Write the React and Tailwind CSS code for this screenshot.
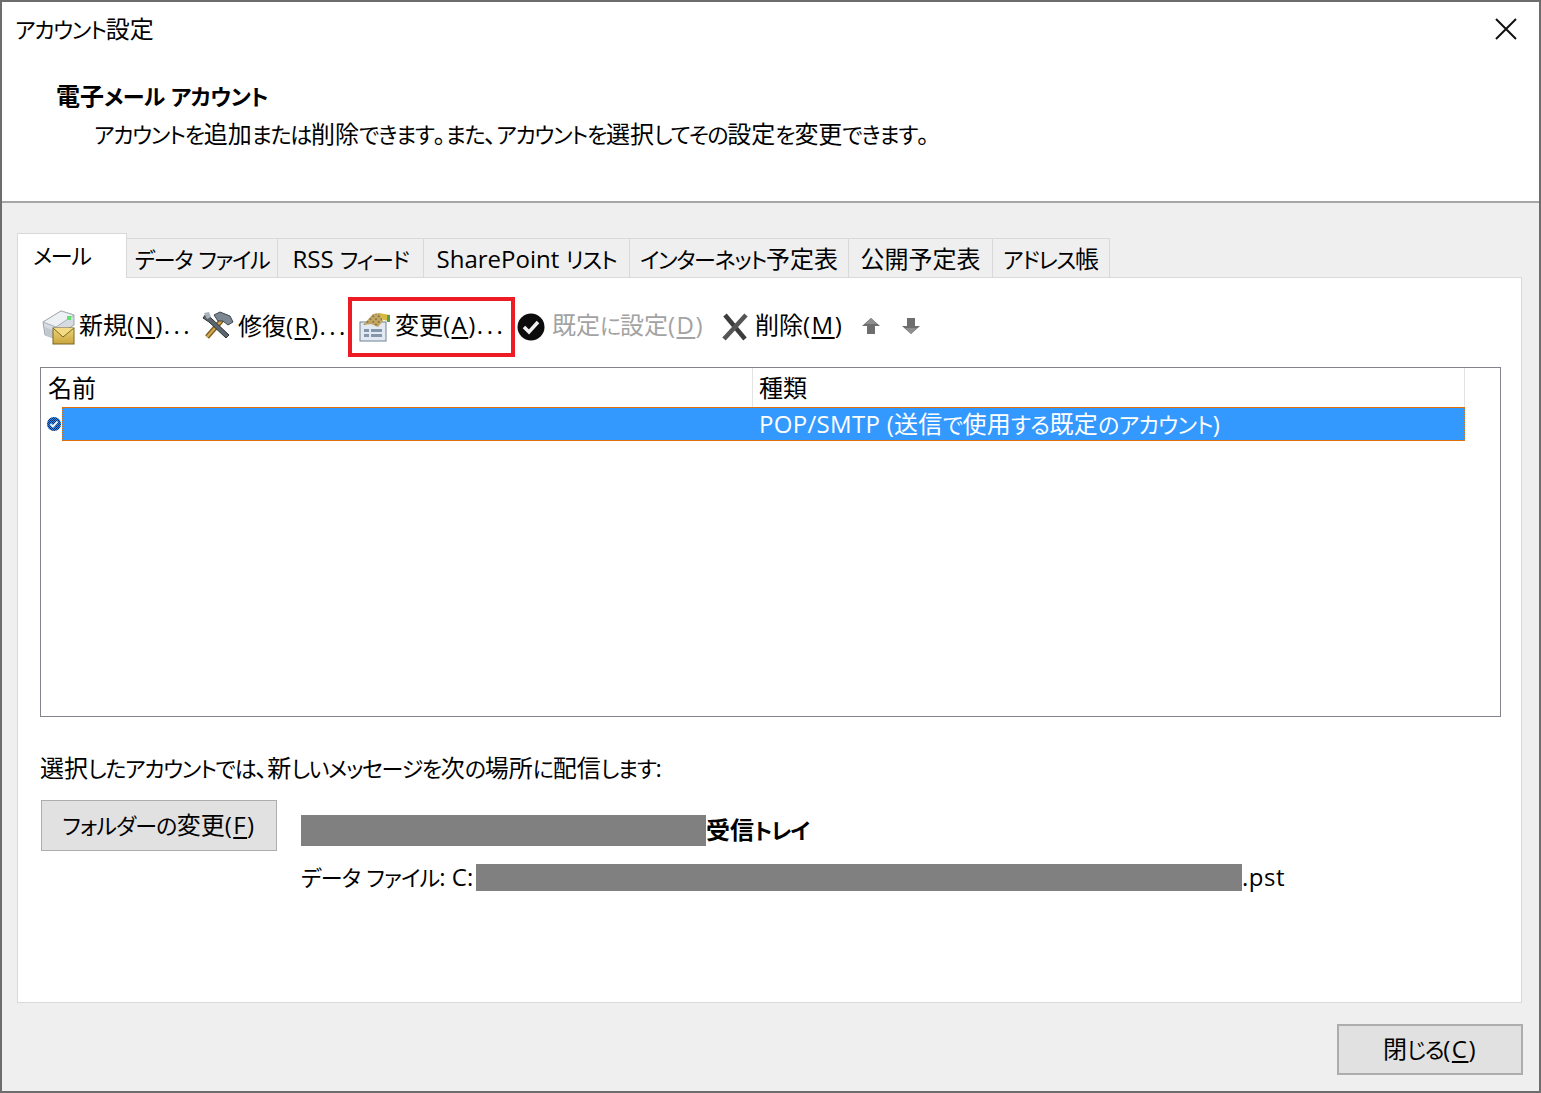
import React from 'react';

// kana runs are smaller and narrower in the reference font, so shrink only those
function T({ children, kana = 'text-[22px] tracking-[-1.3px]' }) {
    return String(children).split(/([\u3041-\u3096\u30a1-\u30ff]+)/).map((part, i) => (
        i % 2 === 1 ? <span key={i} className={kana}>{part}</span> : part
    ));
}

function NewIcon() {
    return (
        <svg width="34" height="36" viewBox="0 0 34 36" className="shrink-0">
            <defs>
                <linearGradient id="newGold" x1="0" y1="0" x2="0" y2="1">
                    <stop offset="0" stopColor="#f0d676" />
                    <stop offset="1" stopColor="#c9a53f" />
                </linearGradient>
            </defs>
            <path d="M1 13 L19 2 L32 6 L32 16 L14 28 L3 26 Z" fill="#d5dbe0" stroke="#9aa3ab" />
            <path d="M1 13 L14 18 L32 6 L19 2 Z" fill="#eef1f3" stroke="#a8b0b8" />
            <path d="M3 18 L12 22 L12 30 L4 27 Z" fill="#c0c7ce" />
            <rect x="25" y="7" width="4" height="4" fill="#5ee070" />
            <rect x="11" y="19" width="21" height="16" fill="url(#newGold)" stroke="#7d6620" />
            <path d="M11 19 L21 28 L32 19" fill="#f3dc85" stroke="#7d6620" />
        </svg>
    );
}

function RepairIcon() {
    return (
        <svg width="32" height="30" viewBox="0 0 32 30" className="shrink-0">
            <path d="M5 26 L20 9" stroke="#7a5a22" strokeWidth="5" />
            <path d="M5 26 L20 9" stroke="#d3a94b" strokeWidth="2.5" />
            <path d="M12 4 L18 1 L28 5 L31 11 L26 14 L21 10 L16 10 Z" fill="#7d8791" stroke="#3e454c" />
            <path d="M4 3 L9 7 L27 24 L24 27 L7 11 L1 7 Z" fill="#5c656e" stroke="#2e343a" />
            <path d="M2 2 L7 1 L9 6 L5 8 Z" fill="#aab2ba" />
        </svg>
    );
}

function ChangeIcon() {
    return (
        <svg width="32" height="30" viewBox="0 0 32 30" className="shrink-0">
            <defs>
                <pattern id="diamond" width="4" height="4" patternUnits="userSpaceOnUse" patternTransform="rotate(45)">
                    <rect width="4" height="4" fill="#c4a862" />
                    <rect width="2" height="2" fill="#8f7a46" />
                </pattern>
            </defs>
            <rect x="1" y="10" width="26" height="19" fill="#e2e9f2" stroke="#6f8196" />
            <rect x="5" y="17" width="5" height="3" fill="#8496ab" />
            <rect x="12" y="17" width="11" height="3" fill="#8496ab" />
            <rect x="5" y="22" width="5" height="3" fill="#8496ab" />
            <rect x="12" y="22" width="11" height="3" fill="#8496ab" />
            <path d="M4 13 L14 2 L21 1 L24 9 L19 15 L12 12 Z" fill="url(#diamond)" />
            <path d="M20 1 L31 3 L30 9 L24 8 Z" fill="#d9b83f" />
            <rect x="28" y="3" width="3" height="7" fill="#55a04a" />
        </svg>
    );
}

function DefaultIcon() {
    return (
        <svg width="28" height="28" viewBox="0 0 28 28" className="shrink-0">
            <circle cx="14" cy="14" r="13.5" fill="#0c0c0c" />
            <path d="M7 14 L12 19 L21 9" fill="none" stroke="#f2f2f2" strokeWidth="3.5" />
        </svg>
    );
}

function DeleteIcon() {
    return (
        <svg width="26" height="28" viewBox="0 0 26 28" className="shrink-0">
            <path d="M3 2 L23 26" stroke="#3c3c3c" strokeWidth="4.5" />
            <path d="M24 2 L2 26" stroke="#555" strokeWidth="4.5" />
        </svg>
    );
}

function ArrowIcon({ down }) {
    return (
        <svg width="18" height="18" viewBox="0 0 18 18" className={down ? 'shrink-0 rotate-180' : 'shrink-0'}>
            <path d="M9 1 L18 9 L13 9 L13 17 L5 17 L5 9 L0 9 Z" fill="#6e6e6e" />
            <path d="M9 1 L15 7 L3 7 Z" fill="#8e8e8e" />
        </svg>
    );
}

function StatusIcon() {
    return (
        <svg width="14" height="14" viewBox="0 0 14 14" className="shrink-0">
            <defs>
                <pattern id="dither" width="2" height="2" patternUnits="userSpaceOnUse">
                    <rect width="2" height="2" fill="#2a8cf0" />
                    <rect width="1" height="1" fill="#0a2a66" />
                    <rect x="1" y="1" width="1" height="1" fill="#0a2a66" />
                </pattern>
            </defs>
            <circle cx="7" cy="7" r="7" fill="url(#dither)" />
            <path d="M3.5 7 L6 9.5 L10.5 4.5" fill="none" stroke="#e6f1ff" strokeWidth="2" />
        </svg>
    );
}

function Key({ k, dots }) {
    return (
        <>
            <span className="tracking-[1.5px]">(<span className="underline underline-offset-[3px] decoration-2">{k}</span>)</span>
            {dots && <span className="tracking-[3.5px]">...</span>}
        </>
    );
}

const tabs = [
    { label: 'データ ファイル', width: 'w-[151px]' },
    { label: 'RSS フィード', width: 'w-[146px]' },
    { label: 'SharePoint リスト', width: 'w-[206px]' },
    { label: 'インターネット予定表', width: 'w-[219px]' },
    { label: '公開予定表', width: 'w-[144px]' },
    { label: 'アドレス帳', width: 'w-[117px]' },
];

export default function App() {
    return (
        <div className="w-[1541px] h-[1093px] flex flex-col border-2 border-[#6d6d6d] bg-[#efefef] text-[24px] leading-[36px] text-black [font-family:'Open_Sans','Noto_Sans_CJK_JP',sans-serif] [font-feature-settings:'palt'] overflow-hidden">
            <header className="h-[201px] shrink-0 bg-white border-b-2 border-[#a6a6a6] relative">
                <div className="pl-[13px] pt-[9px]"><T>アカウント設定</T></div>
                <svg width="22" height="22" viewBox="0 0 22 22" className="absolute right-[22px] top-[16px]">
                    <path d="M1 1 L21 21 M21 1 L1 21" stroke="#111" strokeWidth="2" />
                </svg>
                <div className="pl-[54px] pt-[31px] font-bold"><T kana="text-[22px] tracking-[-0.6px]">電子メール アカウント</T></div>
                <div className="pl-[92px] pt-[2px]"><T>アカウントを追加または削除できます。また、アカウントを選択してその設定を変更できます。</T></div>
            </header>

            <main className="flex-1 flex flex-col pl-[15px] pr-[17px] pt-[30px]">
                <div className="flex items-end h-[44px]">
                    <div className="w-[110px] h-[45px] -mb-px z-10 bg-white border border-b-0 border-[#d9d9d9] pl-[15px] pt-[3px]"><T>メール</T></div>
                    {tabs.map((tab) => (
                        <div key={tab.label} className={`${tab.width} h-[39px] border-t border-r border-[#d9d9d9] text-center leading-[39px] whitespace-nowrap`}>
                            <T>{tab.label}</T>
                        </div>
                    ))}
                </div>

                <div className="h-[726px] bg-white border border-[#d9d9d9] flex flex-col pl-[22px] pr-[20px]">
                    <div className="flex items-center h-[60px] mt-[19px]">
                        <div className="flex items-center gap-[3px] ml-[2px] w-[160px]">
                            <NewIcon />
                            <span className="whitespace-nowrap mb-[4px]">新規<Key k="N" dots /></span>
                        </div>
                        <div className="flex items-center gap-[4px] w-[146px] -mt-[2px]">
                            <RepairIcon />
                            <span className="whitespace-nowrap">修復<Key k="R" dots /></span>
                        </div>
                        <div className="flex items-center gap-[4px] w-[167px] h-[60px] border-4 border-[#ed1c24] pl-[7px] shrink-0">
                            <ChangeIcon />
                            <span className="whitespace-nowrap mb-[4px]">変更<Key k="A" dots /></span>
                        </div>
                        <div className="flex items-center gap-[7px] ml-[2px] w-[205px]">
                            <DefaultIcon />
                            <span className="whitespace-nowrap mb-[4px] text-[#a3a3a3]">既定<T>に</T>設定<Key k="D" /></span>
                        </div>
                        <div className="flex items-center gap-[7px] w-[140px]">
                            <DeleteIcon />
                            <span className="whitespace-nowrap mb-[4px]">削除<Key k="M" /></span>
                        </div>
                        <div className="flex items-center gap-[22px] -mt-[2px]">
                            <ArrowIcon />
                            <ArrowIcon down />
                        </div>
                    </div>

                    <div className="mt-[10px] h-[350px] border border-[#83838c] flex flex-col">
                        <div className="flex h-[39px] shrink-0 mr-[35px]">
                            <div className="w-[712px] border-r border-[#e3e3e3] pl-[7px] leading-[40px]">名前</div>
                            <div className="flex-1 border-r border-[#e3e3e3] pl-[6px] leading-[40px]">種類</div>
                        </div>
                        <div className="flex items-center h-[34px] mr-[35px]">
                            <div className="w-[21px] shrink-0 flex justify-center pl-[4px]"><StatusIcon /></div>
                            <div className="flex-1 h-full bg-[#3399ff] border border-dotted border-[#e0700a] text-white pl-[696px] leading-[32px] whitespace-nowrap tracking-[0.3px]">
                                <T kana="text-[22px] tracking-[-0.6px]">POP/SMTP (送信で使用する既定のアカウント)</T>
                            </div>
                        </div>
                    </div>

                    <div className="mt-[33px]"><T>選択したアカウントでは、新しいメッセージを次の場所に配信します:</T></div>

                    <div className="flex mt-[14px]">
                        <div className="w-[236px] h-[51px] ml-px shrink-0 bg-[#e1e1e1] border border-[#adadad] text-center leading-[48px]">
                            <T kana="text-[22px] tracking-[-0.8px]">フォルダーの変更</T><Key k="F" />
                        </div>
                        <div className="ml-[24px] pt-[15px] flex flex-col">
                            <div className="flex items-center h-[31px] font-bold">
                                <div className="w-[405px] h-[31px] bg-[#808080]" />
                                <span className="mb-[2px]"><T>受信トレイ</T></span>
                            </div>
                            <div className="flex items-center h-[27px] mt-[18px] whitespace-nowrap">
                                <span className="mb-[2px] w-[175px]"><T kana="text-[22px] tracking-[-0.8px]">データ ファイル</T>: C:</span>
                                <div className="w-[766px] h-[27px] bg-[#808080]" />
                                <span className="mb-[2px] tracking-[0.5px]">.pst</span>
                            </div>
                        </div>
                    </div>
                </div>

                <div className="flex justify-end mt-[21px] -mr-px">
                    <div className="w-[186px] h-[51px] bg-[#e1e1e1] border-2 border-[#adadad] text-center leading-[45px]">
                        閉<T>じる</T><Key k="C" />
                    </div>
                </div>
            </main>
        </div>
    );
}
